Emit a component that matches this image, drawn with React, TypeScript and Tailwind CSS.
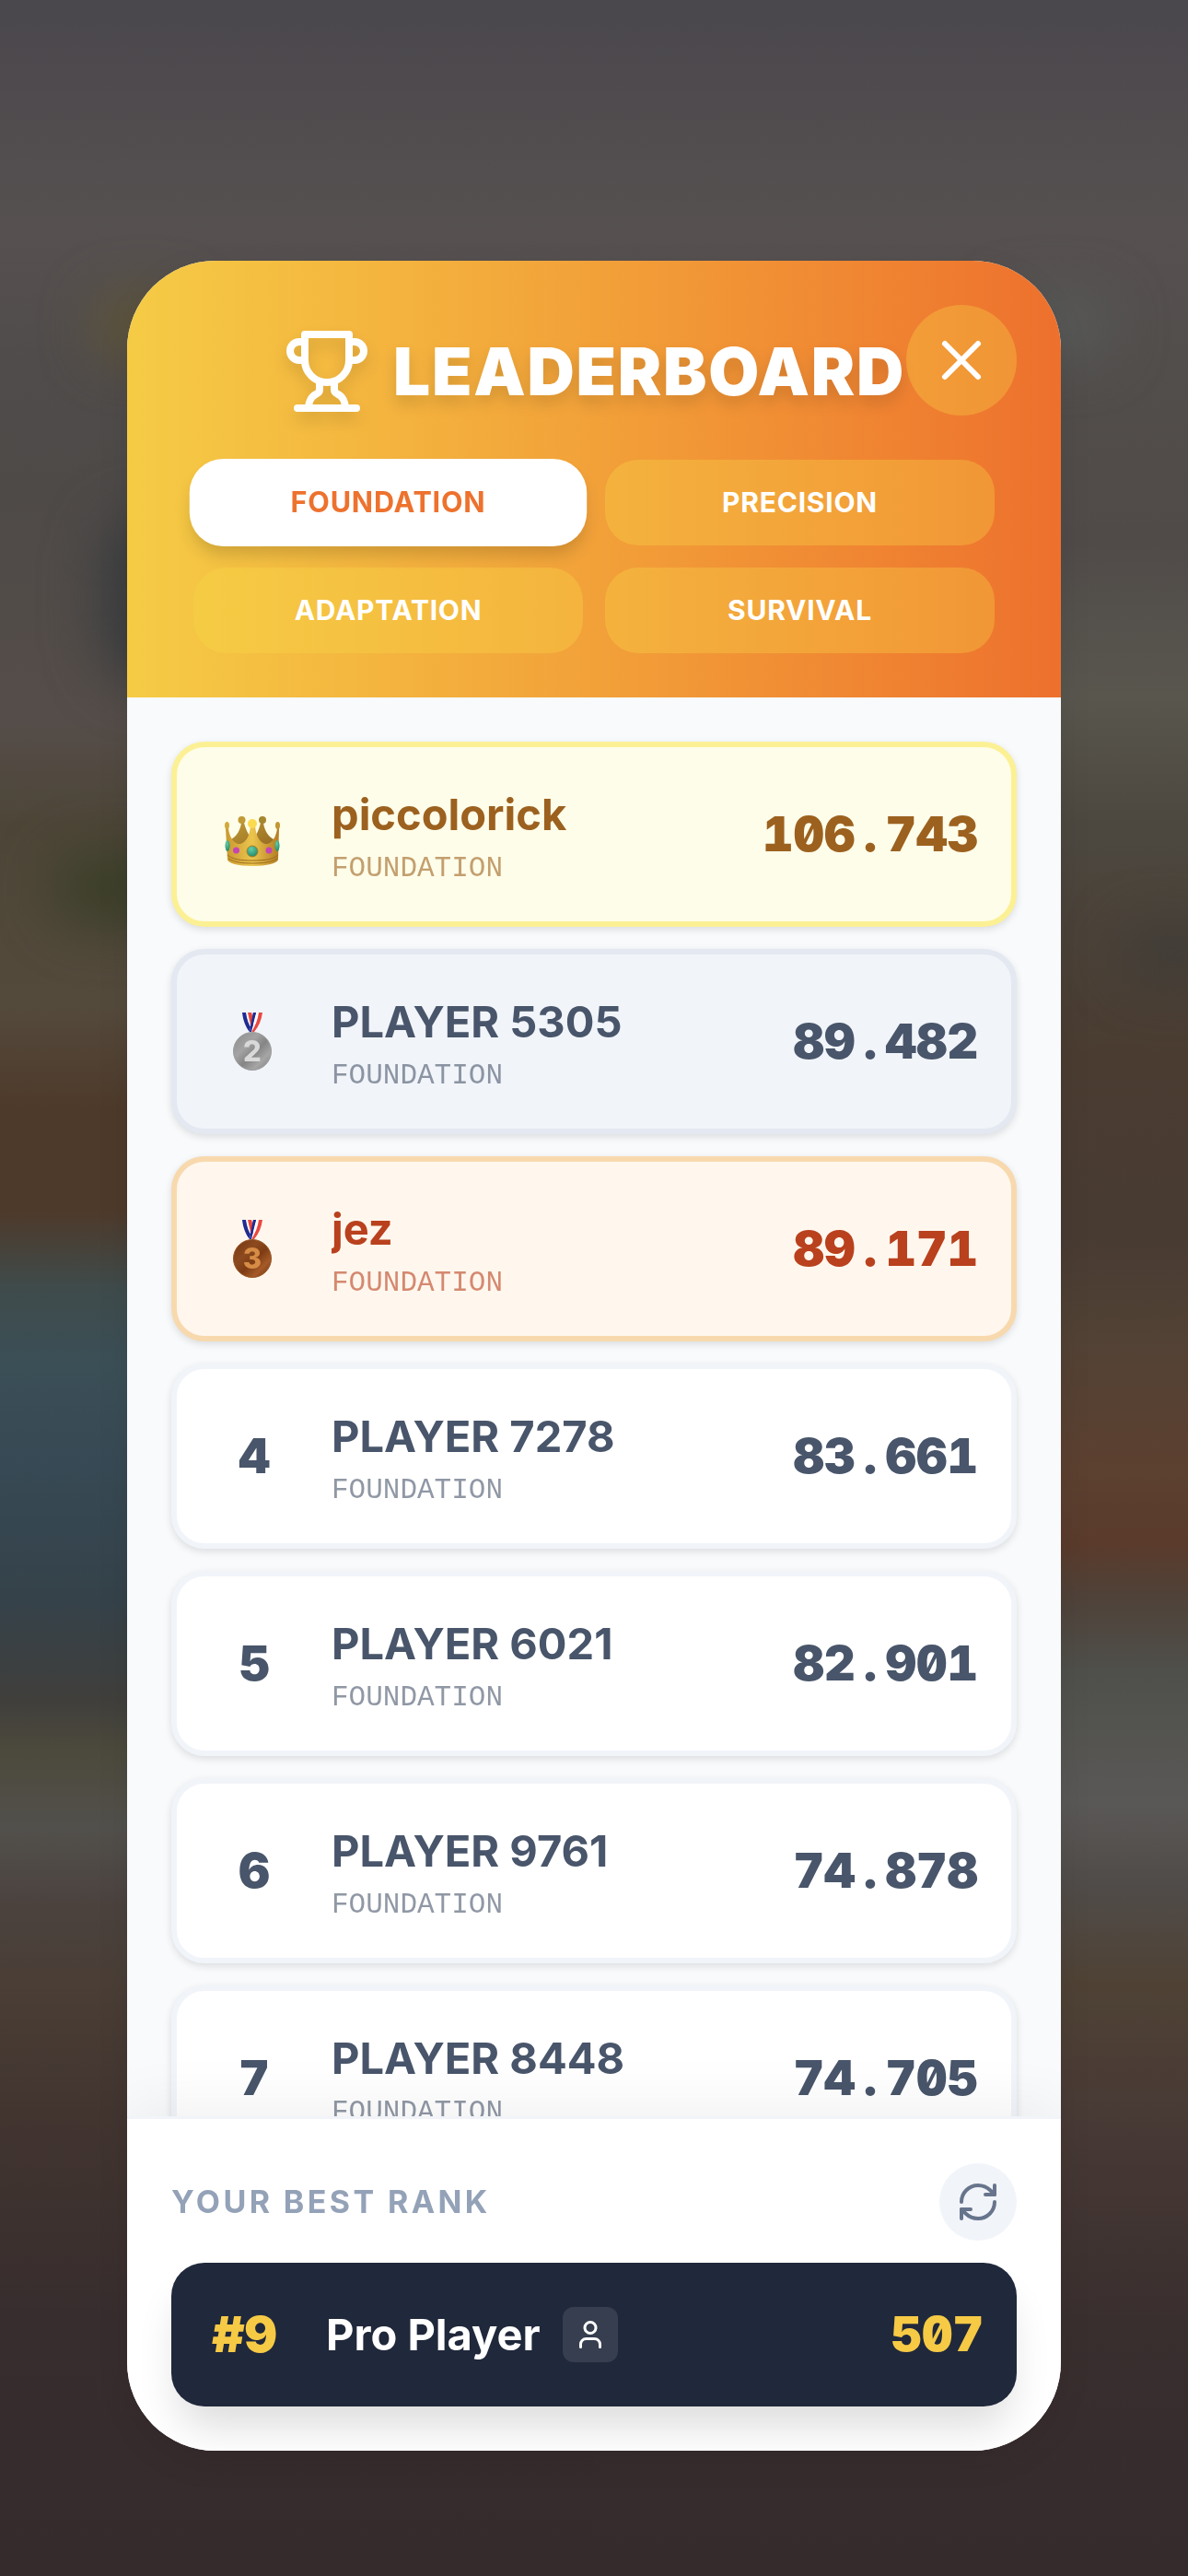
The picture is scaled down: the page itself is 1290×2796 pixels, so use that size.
import { useState } from "react";
import { RefreshCw, User, X } from "lucide-react";

type Entry = { rank: number; name: string; score: string };

const MODES = ["FOUNDATION", "PRECISION", "ADAPTATION", "SURVIVAL"];

const ENTRIES: Entry[] = [
  { rank: 1, name: "piccolorick", score: "106.743" },
  { rank: 2, name: "PLAYER 5305", score: "89.482" },
  { rank: 3, name: "jez", score: "89.171" },
  { rank: 4, name: "PLAYER 7278", score: "83.661" },
  { rank: 5, name: "PLAYER 6021", score: "82.901" },
  { rank: 6, name: "PLAYER 9761", score: "74.878" },
  { rank: 7, name: "PLAYER 8448", score: "74.705" },
];

function rowStyle(rank: number) {
  if (rank === 1) return "bg-[#fefde9] border-[#fcf094] text-[#9c611f]";
  if (rank === 2) return "bg-[#f1f4f9] border-[#e3e8f1] text-[#48556a]";
  if (rank === 3) return "bg-[#fff7ee] border-[#f8d9ae] text-[#b9411d]";
  return "bg-white border-[#f1f4f9] text-[#48556a]";
}

function TrophyIcon() {
  return (
    <svg
      viewBox="0 0 24 24"
      fill="none"
      stroke="currentColor"
      strokeWidth="2"
      strokeLinecap="round"
      strokeLinejoin="round"
      className="size-24 shrink-0"
      aria-hidden="true"
    >
      <path d="M6 9H4.5a2.5 2.5 0 0 1 0-5H6" />
      <path d="M18 9h1.5a2.5 2.5 0 0 0 0-5H18" />
      <path d="M4 22h16" />
      <path d="M10 14.66V17c0 .55-.47.98-.97 1.21C7.85 18.75 7 20.24 7 22" />
      <path d="M14 14.66V17c0 .55.47.98.97 1.21C16.15 18.75 17 20.24 17 22" />
      <path d="M18 2H6v7a6 6 0 0 0 12 0V2Z" />
    </svg>
  );
}

function Crown() {
  return (
    <svg viewBox="0 0 64 56" className="mt-3 mr-1 h-14 w-16" role="img" aria-label="First place">
      <defs>
        <linearGradient id="crownBand" x1="0" x2="1" y1="0" y2="0">
          <stop offset="0" stopColor="#c9992f" />
          <stop offset="0.5" stopColor="#ecc44d" />
          <stop offset="1" stopColor="#b47c24" />
        </linearGradient>
        <linearGradient id="crownBack" x1="0" x2="1" y1="0" y2="1">
          <stop offset="0" stopColor="#c09b35" />
          <stop offset="1" stopColor="#8f6420" />
        </linearGradient>
        <radialGradient id="crownGreen" cx="0.4" cy="0.3" r="0.8">
          <stop offset="0" stopColor="#63cfa6" />
          <stop offset="1" stopColor="#1d7f62" />
        </radialGradient>
      </defs>
      <path d="M6 28c6-1 13-9 14-19h3c2 9 7 16 9 19 3-3 7-10 9-19h3c1 10 8 18 14 19l-8 13H14z" fill="url(#crownBack)" />
      <circle cx="20.500" cy="6" r="4" fill="#c19a37" />
      <circle cx="43" cy="6" r="4" fill="#a5872f" />
      <path
        d="M3 15h3c1 9 6 18 13 17 7-2 10-10 11-19h5c1 9 4 17 11 19 7 1 12-8 13-17h2l-1 34c-1 4-12 7-28 7S6 53 5 49z"
        fill="url(#crownBand)"
      />
      <path d="M5 44c6 5 14 6 27 6s22-1 28-6M6 48c7 4 15 5 26 5s20-1 27-5" fill="none" stroke="#9b6c1d" strokeWidth="1" />
      <ellipse cx="4.500" cy="12" rx="2.500" ry="4" fill="#d2aa3c" />
      <ellipse cx="59.500" cy="12" rx="2.500" ry="4" fill="#c39631" />
      <circle cx="32" cy="10" r="5" fill="#fbda50" />
      <ellipse cx="5" cy="34" rx="2.500" ry="6" fill="url(#crownGreen)" />
      <ellipse cx="59" cy="34" rx="2.500" ry="6" fill="url(#crownGreen)" />
      <circle cx="14.500" cy="39" r="3.500" fill="#c545b4" />
      <circle cx="50" cy="39" r="3.500" fill="#c545b4" />
      <circle cx="32" cy="40" r="6" fill="url(#crownGreen)" stroke="#a97f25" strokeWidth="1" />
    </svg>
  );
}

function Medal({ place }: { place: 2 | 3 }) {
  const silver = place === 2;
  const id = silver ? "medalSilver" : "medalBronze";
  return (
    <svg
      viewBox="0 0 44 64"
      className="mr-1 h-16 w-11"
      role="img"
      aria-label={silver ? "Second place" : "Third place"}
    >
      <defs>
        <linearGradient id={id} x1="0" x2="1" y1="0" y2="1">
          <stop offset="0" stopColor={silver ? "#8c8c8c" : "#743512"} />
          <stop offset="0.35" stopColor={silver ? "#a3a3a3" : "#8d4a1f"} />
          <stop offset="0.55" stopColor={silver ? "#858585" : "#7e3c14"} />
          <stop offset="0.75" stopColor={silver ? "#a6a6a6" : "#a55a28"} />
          <stop offset="1" stopColor={silver ? "#7a7a7a" : "#6e3010"} />
        </linearGradient>
      </defs>
      <path d="M17 0h4l3 12-1 6z" fill="#e8483f" />
      <path d="M33 0h-9l-6 21h5c5-4 8-12 10-21z" fill="#fff" />
      <path d="M33 0h-4c-1 8-4 15-8 21h3c5-6 8-13 9-21z" fill="#ea4840" />
      <path d="M11 0h9l3 17-2 5c-5-5-8-12-10-22z" fill="#fff" />
      <path d="M17 0h4l2 14-2 4z" fill="#e8483f" />
      <path d="M11 0h4c1 7 3 13 6 17l5-17h-3l-4 21c-4-5-7-12-8-21z" fill="#202c92" />
      <path d="M23 0h3l-5 21h-2z" fill="#202c92" />
      <circle cx="22" cy="42" r="20.500" fill={`url(#${id})`} stroke={silver ? "#9d9d9d" : "#9a5524"} strokeWidth="1" />
      <text
        x="22"
        y="53"
        textAnchor="middle"
        fontSize="31"
        fontWeight="800"
        fontFamily="Inter, sans-serif"
        fill={silver ? "#d9d9d9" : "#d68c45"}
      >
        {place}
      </text>
    </svg>
  );
}

function RankBadge({ rank }: { rank: number }) {
  if (rank === 1) return <Crown />;
  if (rank === 2) return <Medal place={2} />;
  if (rank === 3) return <Medal place={3} />;
  return <span className="text-[52px] leading-[72px] font-black">{rank}</span>;
}

// The separator gets a digit-wide cell so the columns of digits line up
function Score({ value }: { value: string }) {
  const [head, tail] = value.split(".");
  return (
    <span className="text-[52px] leading-[72px] font-black tabular-nums slashed-zero">
      {head}
      {tail && <span className="inline-block w-[33px] text-center">.</span>}
      {tail}
    </span>
  );
}

function EntryRow({ entry, mode }: { entry: Entry; mode: string }) {
  return (
    <li
      className={`flex shrink-0 items-center gap-9 rounded-[36px] border-[6px] p-9 shadow-[0_3px_9px_rgba(0,0,0,0.12)] ${rowStyle(entry.rank)}`}
    >
      <div className="flex w-24 shrink-0 items-center justify-center">
        <RankBadge rank={entry.rank} />
      </div>
      <div className="min-w-0 flex-1">
        <div className="truncate text-[47px] leading-[74px] font-bold">{entry.name}</div>
        <div className="font-['Liberation_Mono',monospace] text-[31px] leading-[43px] opacity-60">{mode}</div>
      </div>
      <Score value={entry.score} />
    </li>
  );
}

export default function App() {
  const [mode, setMode] = useState("FOUNDATION");

  return (
    <div className="relative flex h-screen items-center justify-center overflow-hidden bg-[#4a474d] px-[138px] pt-[147px] font-['Inter',sans-serif]">
      {/* Blurred game scene behind the modal */}
      <div className="absolute inset-0 flex" aria-hidden="true">
        <div className="flex-1 bg-[linear-gradient(to_bottom,#4a474d_0%,#565150_9%,#504c4b_14%,#4e4a48_19%,#554d49_28%,#4d4638_32%,#544a3c_39%,#4e3a2b_43%,#4e3a2b_47%,#3f4b4b_50%,#3b4f57_53%,#374954_57%,#35424a_62%,#403f3c_66%,#4c4a3c_68%,#52504c_71%,#4b423e_74%,#4a3e36_77%,#423530_82%,#382d2e_90%,#352a2c_100%)]" />
        <div className="flex-1 bg-[linear-gradient(to_bottom,#4a474d_0%,#565150_9%,#524e4c_14%,#504b49_21%,#59564e_27%,#4c4840_32%,#4a3c31_41%,#483b32_48%,#524235_52%,#5c4030_57%,#5a3b2c_60%,#4f4239_62%,#4f504c_65%,#5a5856_70%,#504c4a_73%,#4f4235_77%,#483a35_82%,#3a2f2f_90%,#352a2c_100%)]" />
      </div>
      <div className="absolute inset-0 blur-[30px]" aria-hidden="true">
        <div className="absolute top-[325px] left-[105px] h-[60px] w-[100px] rounded-full bg-[#625632]" />
        <div className="absolute top-[325px] right-[85px] h-[60px] w-[120px] rounded-full bg-[#585b5a]" />
        <div className="absolute top-[560px] left-[110px] h-[180px] w-[100px] rounded-full bg-[#393c3e]" />
        <div className="absolute top-[930px] left-[60px] h-[70px] w-[160px] rounded-full bg-[#383d27]" />
        <div className="absolute top-[1010px] -right-10 h-[50px] w-[110px] rounded-full bg-[#3d3b37]" />
      </div>

      <main className="relative flex h-[85vh] w-full flex-col overflow-hidden rounded-[96px] bg-[#f8fafc] shadow-[0_12px_36px_rgba(0,0,0,0.08)]">
        <header className="relative shrink-0 bg-linear-to-r from-[#f5cb45] via-[#f2a139] to-[#ed702d] px-[72px] py-12 text-white">
          <div className="mb-6 flex h-36 items-center justify-center gap-6 drop-shadow-[0_9px_8px_rgba(0,0,0,0.12)]">
            <TrophyIcon />
            <h1 className="text-[71px] leading-[96px] font-black tracking-wide">LEADERBOARD</h1>
          </div>
          <button
            type="button"
            aria-label="Close"
            className="absolute top-12 right-12 flex size-[120px] items-center justify-center rounded-full bg-[#fada48]/32"
          >
            <X className="size-[72px]" />
          </button>
          <nav className="grid grid-cols-2 gap-6" aria-label="Game mode">
            {MODES.map((item) => (
              <button
                key={item}
                type="button"
                aria-pressed={item === mode}
                onClick={() => setMode(item)}
                className={`h-[93px] rounded-[36px] text-[30px] leading-[45px] font-bold tracking-wide ${
                  item === mode
                    ? "scale-[1.02] bg-white text-[#ed722e] shadow-[0_12px_18px_-3px_rgba(0,0,0,0.16)]"
                    : "bg-[#fada48]/32 text-white"
                }`}
              >
                {item}
              </button>
            ))}
          </nav>
        </header>

        <ul className="flex min-h-0 flex-1 flex-col gap-6 overflow-hidden p-12">
          {ENTRIES.map((entry) => (
            <EntryRow key={entry.rank} entry={entry} mode="FOUNDATION" />
          ))}
        </ul>

        <footer className="relative shrink-0 border-t-[3px] border-[#f1f4f9] bg-white p-12 shadow-[0_-12px_60px_rgba(0,0,0,0.06)]">
          <div className="mb-6 flex items-center justify-between">
            <h2 className="text-[34px] leading-[54px] font-bold tracking-widest text-[#94a2b8]">YOUR BEST RANK</h2>
            <button
              type="button"
              aria-label="Refresh"
              className="flex size-[84px] items-center justify-center rounded-full bg-[#f1f4f9] text-[#67758c]"
            >
              <RefreshCw className="size-12" />
            </button>
          </div>
          <div className="flex h-[156px] items-center rounded-[36px] bg-[#20283b] px-9 text-white shadow-[0_30px_45px_-9px_rgba(0,0,0,0.14)]">
            <span className="w-[132px] pl-2 text-[54px] leading-[72px] font-black text-[#f6ca45] tabular-nums">#9</span>
            <span className="text-[47px] leading-[72px] font-bold">Pro Player</span>
            <span className="ml-6 flex size-[60px] items-center justify-center rounded-xl bg-white/10">
              <User className="size-9" />
            </span>
            <span className="ml-auto text-[#f6ca45]">
              <Score value="507" />
            </span>
          </div>
        </footer>
      </main>
    </div>
  );
}
